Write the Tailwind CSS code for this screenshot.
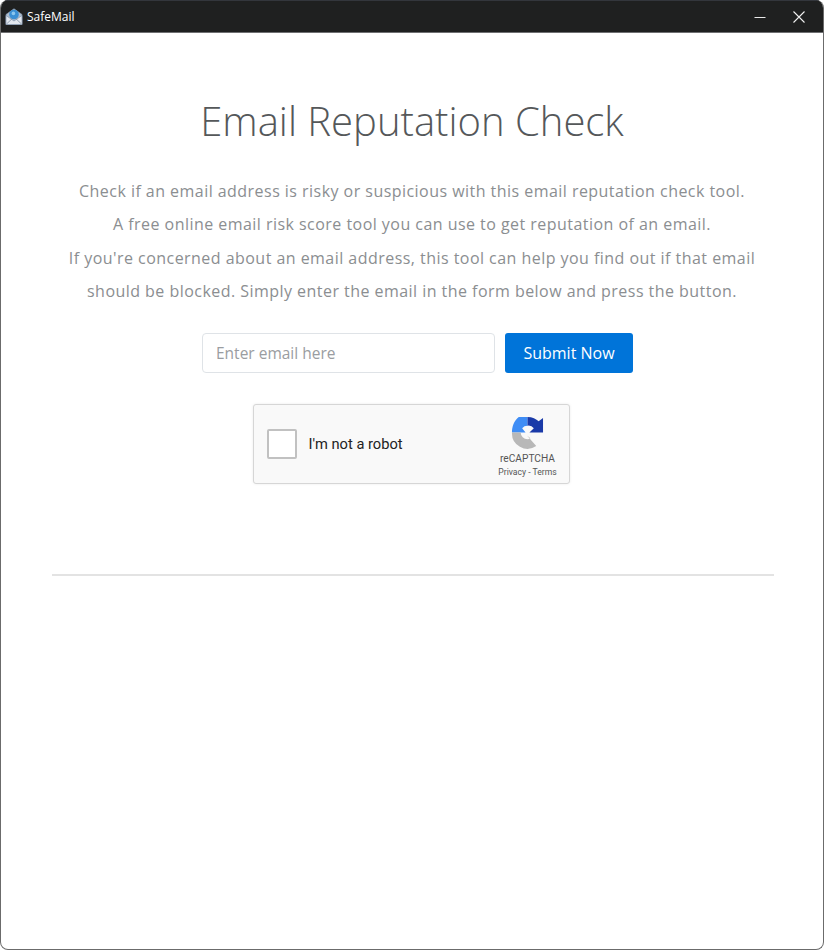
<!DOCTYPE html>
<html>
  <head>
    <meta charset="UTF-8">
    <title>SafeMail</title>
    <script src="https://cdn.jsdelivr.net/npm/@tailwindcss/browser@4"></script>
  </head>
  <body class="bg-white h-[950px] overflow-hidden" style="font-family: 'Noto Sans', sans-serif">
    <div class="relative w-[824px] h-[950px] bg-white border-x border-b border-[#6b6b6b] rounded-lg overflow-hidden flex flex-col">
      <!--title bar-->
      <header class="h-[33px] bg-[#1f2020] border-t border-t-[#33363c] border-b border-b-[#6f7072] flex items-center text-white shrink-0">
        <svg class="ml-[4px] w-[18px] h-[18px]" viewBox="0 0 18 18">
          <path d="M1 6.5 L9 0.8 L17 6.5 V16.5 H1 Z" fill="#aebccd" stroke="#8496ad" stroke-width="0.7"/>
          <circle cx="9" cy="6.5" r="4.8" fill="#3a8fd4"/>
          <circle cx="8.4" cy="5.4" r="1.8" fill="#8cc6ee"/>
          <path d="M1 7.5 L9 13 L17 7.5 V16.5 H1 Z" fill="#e3e8ef" stroke="#8496ad" stroke-width="0.7"/>
          <path d="M1.5 16 L7 10.8 M16.5 16 L11 10.8" stroke="#7f8fa3" stroke-width="0.8"/>
        </svg>
        <span class="ml-[4px] text-[12px]" style="font-family: 'Open Sans', sans-serif">SafeMail</span>
        <div class="ml-auto flex items-center">
          <svg class="w-[12px] h-[12px] mr-[27px]" viewBox="0 0 12 12"><path d="M0.5 6.5 H11.5" stroke="#e8e8e8" stroke-width="1"/></svg>
          <svg class="w-[12px] h-[12px] mr-[18px]" viewBox="0 0 12 12"><path d="M0.5 0.5 L11.5 11.5 M11.5 0.5 L0.5 11.5" stroke="#efefef" stroke-width="1.1"/></svg>
        </div>
      </header>

      <main class="flex flex-col items-center">
        <h1 class="mt-[58px] text-[40px] leading-[60px] font-light text-[#55585a]" style="font-family: 'Open Sans', sans-serif">Email Reputation Check</h1>

        <div class="mt-[24px] text-center text-[16px] leading-[33.4px] text-[#8b8e91] tracking-[0.46px] whitespace-nowrap" style="font-family: 'Open Sans', sans-serif">
          <p>Check if an email address is risky or suspicious with this email reputation check tool.</p>
          <p>A free online email risk score tool you can use to get reputation of an email.</p>
          <p>If you're concerned about an email address, this tool can help you find out if that email</p>
          <p>should be blocked. Simply enter the email in the form below and press the button.</p>
        </div>

        <form class="mt-[24px] flex gap-[10px] ml-[11px]" style="font-family: 'Open Sans', sans-serif">
          <input placeholder="Enter email here" class="w-[293px] h-[40px] px-[13px] bg-white border border-[#dfe3e7] rounded-[4px] text-[15.5px] placeholder:text-[#9a9da1]" />
          <button type="button" class="w-[128px] h-[40px] bg-[#0074d9] rounded-[3px] text-white text-[16px]">Submit Now</button>
        </form>

        <!--recaptcha box-->
        <div class="mt-[31px] mr-[2px] w-[317px] h-[80px] bg-[#f9f9f9] border border-[#d6d6d6] rounded-[3px] shadow-[0_0_3px_rgba(0,0,0,0.08)] flex items-center" style="font-family: Roboto, sans-serif">
          <div class="ml-[13px] w-[30px] h-[30px] bg-white border-2 border-[#c1c1c1] rounded-[2px]"></div>
          <span class="ml-[12px] text-[14.7px] text-[#222]">I'm not a robot</span>
          <div class="ml-auto mr-[10px] w-[62px] self-start mt-[11px] flex flex-col items-center">
            <svg class="w-[33px] h-[33px]" viewBox="0 0 34 34">
              <path d="M8 1 H17 V10 A7 7 0 0 0 11.5 12.5 L15 17 H1 C1 11 3 5 8 1 Z" fill="#3f8df5"/>
              <path d="M17 1 C22 1 26 3 28.5 5.5 L33 2 V17 H19 L23.5 12.5 A7 7 0 0 0 17 10 Z" fill="#1a3aa8"/>
              <path d="M1 17 H10 A7 7 0 0 0 17 24 A7 7 0 0 0 20 23 L16.5 20 L26 31 A16 16 0 0 1 1 17 Z" fill="#b8b8b8"/>
            </svg>
            <span class="text-[10.2px] leading-[12px] mt-[4px] text-[#555]">reCAPTCHA</span>
            <span class="text-[8.6px] leading-[12px] mt-[1px] text-[#555] whitespace-nowrap">Privacy - Terms</span>
          </div>
        </div>

        <hr class="mt-[90px] w-[722px] ml-[1px] border-t-2 border-[#e3e3e3]" />
      </main>

      <!--sliver of desktop showing through the window edge-->
      <div class="absolute right-[-1px] top-[597px] w-[1px] h-[11px] bg-[#7ab8d0]"></div>
    </div>
  </body>
</html>
